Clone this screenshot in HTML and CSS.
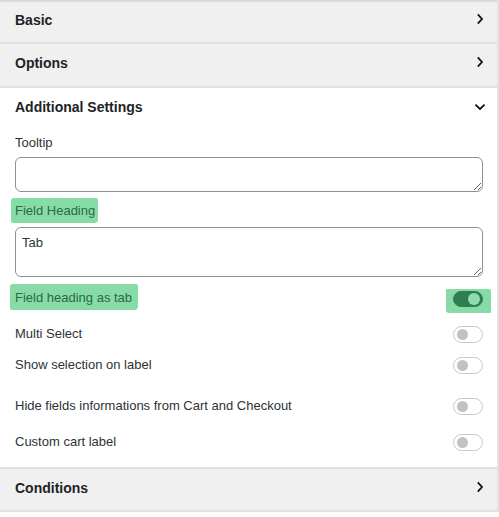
FILE: index.html
```html
<!DOCTYPE html>
<html>
<head>
<meta charset="utf-8">
<link rel="stylesheet" href="styles.css">
</head>
<body>
<div class="panel">
  <div class="section">
    <div class="header header-first">
      <span class="title">Basic</span>
      <span class="icon"><svg width="8" height="12" viewBox="0 0 8 12"><path d="M1.8 1.4 L6 6 L1.8 10.6" fill="none" stroke="#111" stroke-width="1.8"/></svg></span>
    </div>
  </div>
  <div class="section">
    <div class="header">
      <span class="title">Options</span>
      <span class="icon"><svg width="8" height="12" viewBox="0 0 8 12"><path d="M1.8 1.4 L6 6 L1.8 10.6" fill="none" stroke="#111" stroke-width="1.8"/></svg></span>
    </div>
  </div>
  <div class="section section-open">
    <div class="header header-open">
      <span class="title">Additional Settings</span>
      <span class="icon icon-down"><svg width="12" height="8" viewBox="0 0 12 8"><path d="M1.4 1.6 L6 6 L10.6 1.6" fill="none" stroke="#111" stroke-width="1.8"/></svg></span>
    </div>
    <div class="content">
      <div class="label">Tooltip</div>
      <textarea class="field field-small"></textarea>
      <div class="label-wrap"><span class="label mark mark-heading">Field Heading</span></div>
      <textarea class="field field-large">Tab</textarea>
      <div class="row row-tab">
        <span class="label mark mark-tab">Field heading as tab</span>
        <span class="toggle-mark"><span class="toggle toggle-on"><span class="knob"></span></span></span>
      </div>
      <div class="row row-multi">
        <span class="label">Multi Select</span>
        <span class="toggle"><span class="knob"></span></span>
      </div>
      <div class="row row-show">
        <span class="label">Show selection on label</span>
        <span class="toggle"><span class="knob"></span></span>
      </div>
      <div class="row row-hide">
        <span class="label">Hide fields informations from Cart and Checkout</span>
        <span class="toggle"><span class="knob"></span></span>
      </div>
      <div class="row row-custom">
        <span class="label">Custom cart label</span>
        <span class="toggle"><span class="knob"></span></span>
      </div>
    </div>
  </div>
  <div class="section">
    <div class="header header-last">
      <span class="title">Conditions</span>
      <span class="icon"><svg width="8" height="12" viewBox="0 0 8 12"><path d="M1.8 1.4 L6 6 L1.8 10.6" fill="none" stroke="#111" stroke-width="1.8"/></svg></span>
    </div>
  </div>
</div>
</body>
</html>
```

FILE: styles.css
```css
html, body {
  margin: 0;
  padding: 0;
  background: #ffffff;
}

body {
  font-family: "Liberation Sans", Arial, sans-serif;
  color: #2c3338;
}

.panel {
  width: 497px;
  border-right: 2px solid #e4e4e4;
}

.section {
  border-bottom: 2px solid #e0e0e0;
  background: #ffffff;
}

.header {
  display: flex;
  align-items: center;
  justify-content: space-between;
  background: #f0f0f0;
  padding: 11px 7px 15px 15px;
  height: 16px;
}

.header-first {
  padding-top: 12px;
  padding-bottom: 14px;
  background: linear-gradient(#d2d2d2 0px, #e6e6e6 2px, #f0f0f0 3px);
}

.header-open {
  background: #ffffff;
  padding-bottom: 13px;
}

.header-last {
  padding-top: 11px;
  padding-bottom: 14px;
}

.title {
  font-size: 14px;
  font-weight: bold;
  line-height: 16px;
  color: #1d2327;
}

.icon {
  width: 20px;
  height: 16px;
  display: flex;
  align-items: center;
  justify-content: center;
  margin-top: -3px;
}

.icon-down {
  margin-top: 0;
  padding-left: 1px;
}

.content {
  padding: 7px 14px 16px 15px;
}

.label {
  font-size: 13px;
  line-height: 16px;
  color: #2c3338;
}

.field {
  display: block;
  box-sizing: border-box;
  width: 468px;
  margin: 6px 0 0 0;
  border: 1px solid #8c8f94;
  border-radius: 6px;
  font-family: "Liberation Sans", Arial, sans-serif;
  font-size: 13px;
  line-height: 16px;
  color: #2c3338;
  padding: 7px 6px;
  background: #ffffff;
  resize: vertical;
}

.field-small {
  height: 35px;
}

.field-large {
  height: 50px;
  margin-top: 4px;
}

.label-wrap {
  margin-top: 6px;
  margin-left: -4px;
}

.mark {
  display: inline-block;
  background: #86dba7;
  color: #2b6a43;
  border-radius: 3px 2px 4px 2px;
}

.mark-heading {
  padding: 5px 3px 4px 4px;
}

.mark-tab {
  padding: 6px 6px 4px 5px;
  margin-left: -5px;
}

.row {
  display: flex;
  justify-content: space-between;
  align-items: flex-start;
}

.row .label {
  display: block;
}

.row-tab {
  margin-top: 7px;
}

.row-multi {
  margin-top: 13px;
}

.row-show {
  margin-top: 14px;
}

.row-hide {
  margin-top: 24px;
}

.row-custom {
  margin-top: 19px;
}

.toggle-mark {
  display: block;
  background: #86dba7;
  padding: 2px 8px 6px 7px;
  margin-top: 5px;
  margin-right: -8px;
  border-radius: 1px 2px 1px 3px;
}

.toggle {
  display: flex;
  align-items: center;
  box-sizing: border-box;
  width: 30px;
  height: 17px;
  border: 1px solid #c8c8c8;
  border-radius: 9px;
  padding: 0 2px 0 3px;
  background: #ffffff;
}

.knob {
  display: block;
  width: 11px;
  height: 11px;
  border-radius: 50%;
  background: #c2c2c2;
}

.toggle-on {
  height: 16px;
  border-color: #2f7e50;
  background: #2f7e50;
  justify-content: flex-end;
  padding: 0 2px;
}

.toggle-on .knob {
  width: 12px;
  height: 12px;
  background: #8fdcad;
}
```
